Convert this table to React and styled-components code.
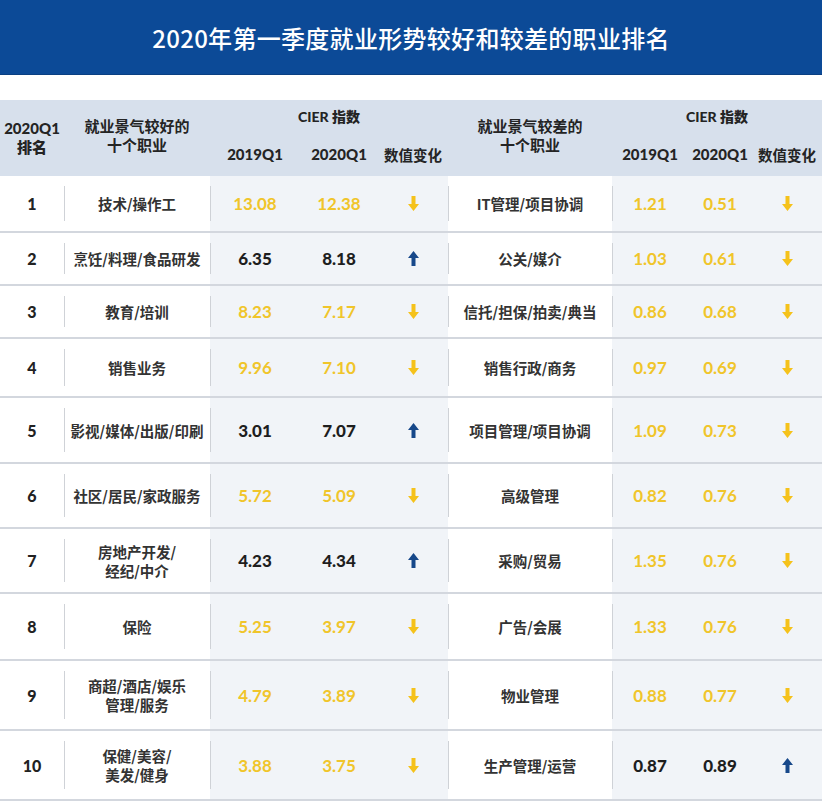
import styled, { createGlobalStyle } from 'styled-components';

const GlobalStyle = createGlobalStyle`
	body {
		margin: 0;
		background: #ffffff;
		font-family: 'Lato', 'Noto Sans CJK SC', sans-serif;
	}
`;

const COLUMNS = '64px 146px 90px 78px 70px 164px 76px 64px 70px';

const GOOD = [
	{ rank: 1, name: '技术/操作工', a: '13.08', b: '12.38', up: false },
	{ rank: 2, name: '烹饪/料理/食品研发', a: '6.35', b: '8.18', up: true },
	{ rank: 3, name: '教育/培训', a: '8.23', b: '7.17', up: false },
	{ rank: 4, name: '销售业务', a: '9.96', b: '7.10', up: false },
	{ rank: 5, name: '影视/媒体/出版/印刷', a: '3.01', b: '7.07', up: true },
	{ rank: 6, name: '社区/居民/家政服务', a: '5.72', b: '5.09', up: false },
	{ rank: 7, name: '房地产开发/\n经纪/中介', a: '4.23', b: '4.34', up: true },
	{ rank: 8, name: '保险', a: '5.25', b: '3.97', up: false },
	{ rank: 9, name: '商超/酒店/娱乐\n管理/服务', a: '4.79', b: '3.89', up: false },
	{ rank: 10, name: '保健/美容/\n美发/健身', a: '3.88', b: '3.75', up: false },
];

const BAD = [
	{ name: 'IT管理/项目协调', a: '1.21', b: '0.51', up: false },
	{ name: '公关/媒介', a: '1.03', b: '0.61', up: false },
	{ name: '信托/担保/拍卖/典当', a: '0.86', b: '0.68', up: false },
	{ name: '销售行政/商务', a: '0.97', b: '0.69', up: false },
	{ name: '项目管理/项目协调', a: '1.09', b: '0.73', up: false },
	{ name: '高级管理', a: '0.82', b: '0.76', up: false },
	{ name: '采购/贸易', a: '1.35', b: '0.76', up: false },
	{ name: '广告/会展', a: '1.33', b: '0.76', up: false },
	{ name: '物业管理', a: '0.88', b: '0.77', up: false },
	{ name: '生产管理/运营', a: '0.87', b: '0.89', up: true },
];

const HEIGHTS = [57, 53, 53, 59, 66, 65, 65, 67, 70, 70];

const Page = styled.div`
	width: 822px;
	height: 802px;
	overflow: hidden;
	background: #ffffff;
`;

const Banner = styled.header`
	height: 75px;
	background: #0c4a97;
	display: flex;
	align-items: center;
	justify-content: center;
	border-bottom: 1px solid #0a3f82;
	box-sizing: border-box;
`;

const Title = styled.h1`
	margin: 0;
	color: #ffffff;
	font-family: 'Noto Sans CJK SC', sans-serif;
	font-weight: 500;
	font-size: 24px;
	letter-spacing: 0.3px;
`;

const Table = styled.div`
	margin-top: 25px;
`;

const HeadRow = styled.div`
	display: grid;
	grid-template-columns: ${COLUMNS};
	grid-template-rows: 36px 40px;
	background: #d7e0ec;
	font-family: 'Lato', 'Noto Sans CJK SC', sans-serif;
	font-weight: 900;
	font-size: 15px;
	color: #242424;
`;

const HeadLabel = styled.div`
	grid-row: 1 / 3;
	grid-column: ${(p) => p.$col};
	display: flex;
	align-items: center;
	justify-content: center;
	text-align: center;
	line-height: 19px;
	white-space: pre-line;
	padding-bottom: ${(p) => (p.$cjk ? '4px' : '0')};
	font-weight: ${(p) => (p.$cjk ? 700 : 900)};
	font-size: 15px;
`;

const GroupLabel = styled.div`
	grid-row: 1;
	grid-column: ${(p) => p.$col};
	display: flex;
	align-items: center;
	justify-content: center;
	padding-bottom: 4px;
	font-size: 14px;
`;

const SubLabel = styled.div`
	grid-row: 2;
	grid-column: ${(p) => p.$col};
	display: flex;
	align-items: center;
	justify-content: center;
	padding-bottom: 4px;
	font-size: ${(p) => (p.$cjk ? '14.5px' : '15px')};
	font-weight: ${(p) => (p.$cjk ? 700 : 900)};
	white-space: nowrap;
`;

const Row = styled.div`
	display: grid;
	grid-template-columns: ${COLUMNS};
	height: ${(p) => p.$h}px;
	box-sizing: border-box;
	border-bottom: 2px solid #d3d7de;
`;

const Cell = styled.div`
	position: relative;
	display: flex;
	align-items: center;
	justify-content: center;
	text-align: center;
	background: ${(p) => (p.$shade ? '#f1f4f8' : '#ffffff')};

	${(p) =>
		p.$divider &&
		`&::before {
			content: '';
			position: absolute;
			left: 0;
			top: 10px;
			bottom: 10px;
			width: 1px;
			background: #cfd2d7;
		}`}
`;

const Rank = styled.span`
	font-family: 'Lato', sans-serif;
	font-weight: 900;
	font-size: 16px;
	color: #222222;
`;

const Job = styled.span`
	font-family: 'Noto Sans CJK SC', sans-serif;
	font-weight: 700;
	font-size: 14.5px;
	line-height: 19px;
	color: #333333;
	white-space: pre-line;
`;

const Value = styled.span`
	font-family: 'Lato', sans-serif;
	font-weight: ${(p) => (p.$up ? 900 : 700)};
	font-size: 17px;
	color: ${(p) => (p.$up ? '#1e1e1e' : '#f0c52a')};
`;

const Arrow = ({ up }) => (
	<svg width="11" height="15" viewBox="0 0 11 15">
		{up ? (
			<path d="M3.5 15 H7.5 V7 H11 L5.5 0 L0 7 H3.5 Z" fill="#17488a" />
		) : (
			<path d="M3.5 0 H7.5 V8 H11 L5.5 15 L0 8 H3.5 Z" fill="#f5c21b" />
		)}
	</svg>
);

export default function App() {
	return (
		<Page>
			<GlobalStyle />
			<Banner>
				<Title>2020年第一季度就业形势较好和较差的职业排名</Title>
			</Banner>
			<Table>
				<HeadRow>
					<HeadLabel $col="1">{'2020Q1\n排名'}</HeadLabel>
					<HeadLabel $col="2" $cjk>{'就业景气较好的\n十个职业'}</HeadLabel>
					<GroupLabel $col="3 / 6">CIER 指数</GroupLabel>
					<SubLabel $col="3">2019Q1</SubLabel>
					<SubLabel $col="4">2020Q1</SubLabel>
					<SubLabel $col="5" $cjk>数值变化</SubLabel>
					<HeadLabel $col="6" $cjk>{'就业景气较差的\n十个职业'}</HeadLabel>
					<GroupLabel $col="7 / 10">CIER 指数</GroupLabel>
					<SubLabel $col="7">2019Q1</SubLabel>
					<SubLabel $col="8">2020Q1</SubLabel>
					<SubLabel $col="9" $cjk>数值变化</SubLabel>
				</HeadRow>
				{GOOD.map((g, i) => {
					const b = BAD[i];
					return (
						<Row key={g.rank} $h={HEIGHTS[i]}>
							<Cell>
								<Rank>{g.rank}</Rank>
							</Cell>
							<Cell $divider>
								<Job>{g.name}</Job>
							</Cell>
							<Cell $shade $divider>
								<Value $up={g.up}>{g.a}</Value>
							</Cell>
							<Cell $shade>
								<Value $up={g.up}>{g.b}</Value>
							</Cell>
							<Cell $shade>
								<Arrow up={g.up} />
							</Cell>
							<Cell $divider>
								<Job>{b.name}</Job>
							</Cell>
							<Cell $shade $divider>
								<Value $up={b.up}>{b.a}</Value>
							</Cell>
							<Cell $shade>
								<Value $up={b.up}>{b.b}</Value>
							</Cell>
							<Cell $shade>
								<Arrow up={b.up} />
							</Cell>
						</Row>
					);
				})}
			</Table>
		</Page>
	);
}
